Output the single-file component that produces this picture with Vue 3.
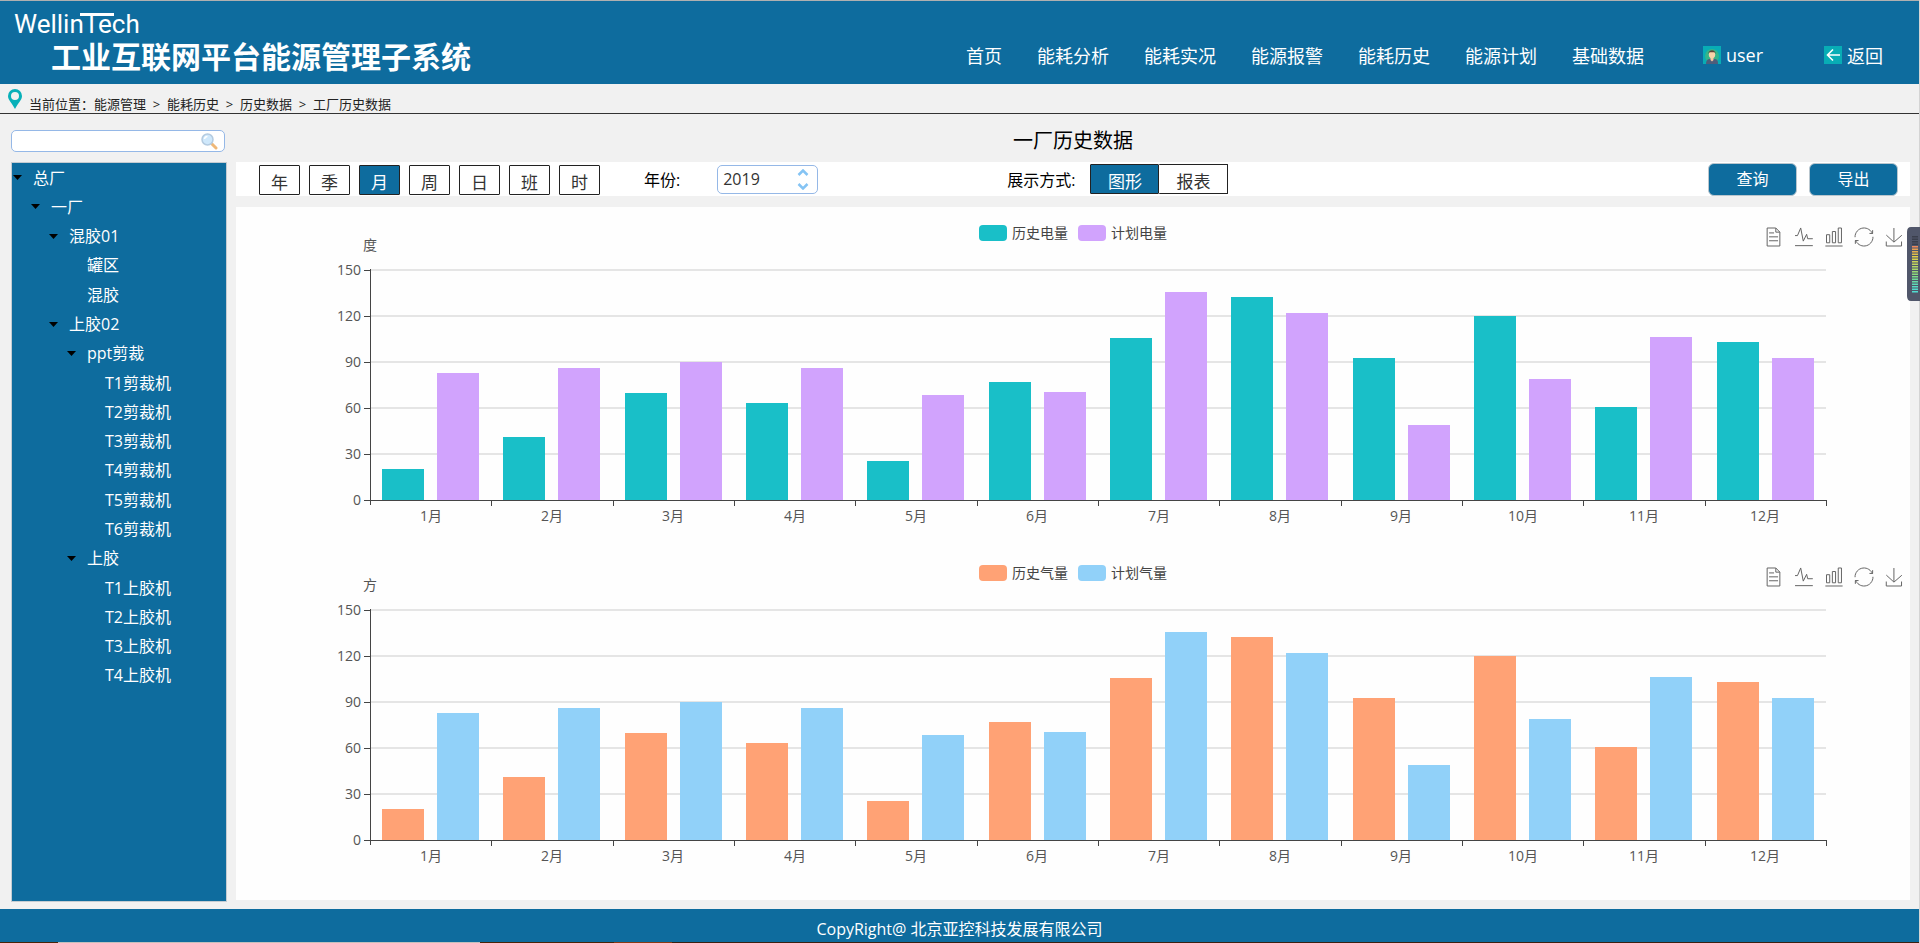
<script setup>
import { ref } from 'vue'

const navItems = ['首页', '能耗分析', '能耗实况', '能源报警', '能耗历史', '能源计划', '基础数据']
const crumbs = ['能源管理', '能耗历史', '历史数据', '工厂历史数据']

const tree = [
  { label: '总厂', level: 0, open: true },
  { label: '一厂', level: 1, open: true },
  { label: '混胶01', level: 2, open: true },
  { label: '罐区', level: 3 },
  { label: '混胶', level: 3 },
  { label: '上胶02', level: 2, open: true },
  { label: 'ppt剪裁', level: 3, open: true },
  { label: 'T1剪裁机', level: 4 },
  { label: 'T2剪裁机', level: 4 },
  { label: 'T3剪裁机', level: 4 },
  { label: 'T4剪裁机', level: 4 },
  { label: 'T5剪裁机', level: 4 },
  { label: 'T6剪裁机', level: 4 },
  { label: '上胶', level: 3, open: true },
  { label: 'T1上胶机', level: 4 },
  { label: 'T2上胶机', level: 4 },
  { label: 'T3上胶机', level: 4 },
  { label: 'T4上胶机', level: 4 },
]

const periods = ['年', '季', '月', '周', '日', '班', '时']
const period = ref('月')
const modes = ['图形', '报表']
const mode = ref('图形')
const year = ref(2019)
const keyword = ref('')

const actual = [20, 41, 70, 63, 25.6, 76.7, 105.6, 132.2, 92.6, 120, 60.5, 103]
const plan = [82.6, 86, 90, 86.4, 68.7, 70.7, 135.6, 122.2, 48.7, 78.8, 106, 92.3]

const charts = [
  { unit: '度', series: [{ name: '历史电量', tone: 'teal', data: actual }, { name: '计划电量', tone: 'violet', data: plan }] },
  { unit: '方', series: [{ name: '历史气量', tone: 'orange', data: actual }, { name: '计划气量', tone: 'sky', data: plan }] },
]

const plot = { left: 134, right: 1590, top: 63, bottom: 293 }
const step = (plot.right - plot.left) / 12
const ticks = [0, 30, 60, 90, 120, 150]
const yOf = (v) => Math.round(plot.bottom - (v / 150) * (plot.bottom - plot.top))
const xOf = (i) => Math.round(plot.left + step * i)

const tools = [
  { name: '数据视图', box: '11.5 2 39.5 56', w: 13, h: 18, d: 'M17.5,17.3H33M45.4,29.5h-28M11.5,2v56H51V14.8L38.4,2H11.5zM38.4,2.2v12.7H51M45.4,41.7h-28' },
  { name: '切换为折线图', box: '4 7 52 52', w: 18, h: 18, d: 'M4.1,28.9h7.1l9.3-22l7.4,38l9.7-19.7l3,12.8h14.9M4.1,58h51.4' },
  { name: '切换为柱状图', box: '2 2 56 56', w: 18, h: 18, d: 'M6.7,22.9h10V48h-10V22.9zM24.9,13h10v35h-10V13zM43.2,2h10v46h-10V2zM3.1,58h53.7' },
  { name: '还原', box: '2 2 56 56', w: 18, h: 18, d: 'M47,18.9h9.8V8.7M56.3,20.1C52.1,9,40.5,0.6,26.8,2.1C12.6,3.7,1.6,16.2,2.1,30.6M13,41.1H3.1v10.2M3.7,39.9c4.2,11.1,15.8,19.5,29.5,18c14.2-1.6,25.2-14.1,24.7-28.5' },
  { name: '保存为图片', box: '0.5 0 58 58', w: 18, h: 18, d: 'M4.7,22.9L29.3,45.5L54.7,23.4M4.6,43.6L4.6,58L53.8,58L53.8,43.6M29.2,45.1L29.2,0' },
]

const meter = ['#3a3f4d', '#3a3f4d', '#3a3f4d', '#3a3f4d', '#f08a5a', '#e8a054', '#e2b04e', '#dfc04a', '#e2d048', '#d6d350', '#cad458', '#c0d660', '#b4d866', '#a8d96c', '#9ada74', '#8cdb7c', '#7edc88', '#70dc98', '#66dca8', '#5edcb6', '#58dcc4', '#54dccc', '#50dcd0']
</script>

<template>
  <div class="page">
    <header class="top">
      <div class="brand">
        <div class="logo">WellinTech</div>
        <h1>工业互联网平台能源管理子系统</h1>
      </div>
      <nav>
        <a v-for="n in navItems" :key="n" href="#">{{ n }}</a>
        <a href="#" class="user">
          <svg width="18" height="18" viewBox="0 0 18 18"><rect width="18" height="18" fill="#08adb5" /><circle cx="9" cy="10" r="7" fill="#35b58a" /><path d="M3 18c0-4 2-5 4-5h4c3 0 4 1 4 5z" fill="#4d5d7c" /><path d="M7.500 11h3v3l-1.500 1.500-1.500-1.500z" fill="#f4c9a0" /><ellipse cx="9" cy="8.500" rx="3.200" ry="3.800" fill="#f9d2a8" /><path d="M5.500 8c-.5-5 7.500-5 7 0l-1-1.800H6.500z" fill="#5b4638" /></svg>user</a>
        <a href="#" class="back">
          <svg width="18" height="18" viewBox="0 0 18 18"><rect width="18" height="18" fill="#08adb5" /><path d="M16 9H4M9 3.500L3.500 9 9 14.500" fill="none" stroke="#fff" stroke-width="1.600" /></svg>返回</a>
      </nav>
    </header>

    <div class="crumbs">
      <svg width="14" height="20" viewBox="0 0 14 20"><path d="M7 0a7 7 0 0 1 7 7c0 4-4 7-7 13C4 14 0 11 0 7a7 7 0 0 1 7-7zm0 3a4 4 0 1 0 0 8 4 4 0 0 0 0-8z" fill="#08b0b9" fill-rule="evenodd" /></svg>
      <p>当前位置：<template v-for="(c, i) in crumbs" :key="c"><i v-if="i">&gt;</i><span>{{ c }}</span></template></p>
    </div>

    <main>
      <aside>
        <div class="search">
          <input v-model="keyword" type="text" aria-label="搜索" />
          <button type="button" aria-label="查找">
            <svg width="17" height="17" viewBox="0 0 17 17"><path d="M10.500 10.500l4.500 4.500" stroke="#efb878" stroke-width="3" stroke-linecap="round" /><circle cx="6.500" cy="6.500" r="5.500" fill="#cfe8fb" stroke="#b4cbe0" stroke-width="1.500" /><path d="M3.500 6a3 3 0 0 1 3-2.500" fill="none" stroke="#fff" stroke-width="1.500" /></svg>
          </button>
        </div>
        <div class="tree">
          <ul>
            <li v-for="t in tree" :key="t.label" :class="'lv' + t.level">
              <svg width="9" height="5" viewBox="0 0 9 5"><path v-if="t.open" d="M0 0h9L4.500 5z" /></svg>
              <span>{{ t.label }}</span>
            </li>
          </ul>
        </div>
      </aside>

      <section class="content">
        <h2>一厂历史数据</h2>
        <div class="bar">
          <div class="periods">
            <button v-for="p in periods" :key="p" type="button" :class="{ on: p === period }" @click="period = p">{{ p }}</button>
          </div>
          <label for="year">年份:</label>
          <div class="spinner">
            <input id="year" v-model="year" type="text" />
            <div class="arrows">
              <button type="button" aria-label="增加" @click="year++"><svg width="12" height="7" viewBox="0 0 12 7"><path d="M1.500 6L6 1.500 10.500 6" /></svg></button>
              <button type="button" aria-label="减少" @click="year--"><svg width="12" height="7" viewBox="0 0 12 7"><path d="M1.500 1L6 5.500 10.500 1" /></svg></button>
            </div>
          </div>
          <div class="mode">
            <span>展示方式:</span>
            <div class="modes">
              <button v-for="m in modes" :key="m" type="button" :class="{ on: m === mode }" @click="mode = m">{{ m }}</button>
            </div>
          </div>
          <div class="actions">
            <button type="button">查询</button>
            <button type="button">导出</button>
          </div>
        </div>

        <div class="panel">
          <figure v-for="c in charts" :key="c.unit" class="chart">
            <svg class="plot" viewBox="0 0 1674 340">
              <rect v-for="t in ticks.slice(1)" :key="t" class="grid" :x="plot.left" :y="yOf(t) - 1" :width="plot.right - plot.left" height="2" />
              <template v-for="(s, k) in c.series" :key="s.name">
                <rect v-for="(v, i) in s.data" :key="i" :class="s.tone" :x="xOf(i) + (k ? 67 : 12)" :y="yOf(v)" width="42" :height="plot.bottom - yOf(v)" />
              </template>
              <g class="axis">
                <rect :x="plot.left" :y="plot.top - 1" width="1" :height="plot.bottom - plot.top + 6" />
                <rect :x="plot.left" :y="plot.bottom" :width="plot.right - plot.left + 1" height="1" />
                <rect v-for="i in 12" :key="i" :x="xOf(i)" :y="plot.bottom" width="1" height="6" />
                <rect v-for="t in ticks" :key="t" :x="plot.left - 6" :y="yOf(t)" width="6" height="1" />
              </g>
              <text :x="plot.left" y="43" text-anchor="middle">{{ c.unit }}</text>
              <text v-for="t in ticks" :key="t" :x="plot.left - 9" :y="yOf(t) + 5" text-anchor="end">{{ t }}</text>
              <text v-for="i in 12" :key="i" :x="xOf(i - 0.5)" :y="plot.bottom + 21" text-anchor="middle">{{ i }}月</text>
            </svg>
            <figcaption>
              <div class="legend">
                <span v-for="s in c.series" :key="s.name"><b :class="s.tone"></b>{{ s.name }}</span>
              </div>
              <div class="tools">
                <button v-for="t in tools" :key="t.name" type="button" :aria-label="t.name">
                  <svg :width="t.w" :height="t.h" :viewBox="t.box"><path :d="t.d" /></svg>
                </button>
              </div>
            </figcaption>
          </figure>
        </div>
      </section>
    </main>

    <footer>CopyRight@ 北京亚控科技发展有限公司</footer>
    <div class="strip"></div>

    <svg class="meter" width="13" height="74" viewBox="0 0 13 74">
      <path d="M13 0H4Q0 0 0 5V69Q0 74 4 74H13z" fill="#50566a" />
      <rect v-for="(m, i) in meter" :key="i" x="5" :y="9 + i * 2.500" width="6" height="1.500" :fill="m" />
    </svg>
  </div>
</template>

<style>
body {
  margin: 0;
}
</style>

<style scoped>
.page {
  --blue: #0e6c9e;
  position: relative;
  box-sizing: border-box;
  display: flex;
  flex-direction: column;
  min-height: 100vh;
  background: #f1f1f1;
  border-right: 1px solid #d4d4d4;
  font: 16px "Open Sans", "Noto Sans CJK SC", sans-serif;
  color: #000;
}
button, input {
  font: inherit;
  color: inherit;
  margin: 0;
  padding: 0;
  border: 0;
  background: none;
  box-sizing: border-box;
}
svg {
  display: block;
}
.top {
  box-sizing: border-box;
  height: 84px;
  border-top: 1px solid #b0b0b0;
  background: var(--blue);
  color: #fff;
  display: flex;
  justify-content: space-between;
}
.brand {
  padding: 7px 0 0 14px;
}
.logo {
  position: relative;
  font: 26px/32px Roboto, sans-serif;
}
.logo::before {
  content: "";
  position: absolute;
  top: 5px;
  left: 66px;
  width: 34px;
  height: 3px;
  background: #fff;
}
h1 {
  margin: 0 0 0 37px;
  font-size: 30px;
  line-height: 34px;
}
nav {
  display: flex;
  align-items: center;
  gap: 35px;
  padding: 24px 36px 0 0;
  font-size: 18px;
}
nav a {
  display: flex;
  align-items: center;
  gap: 5px;
  color: #fff;
  text-decoration: none;
}
.user {
  margin: 0 26px 0 24px;
}
.crumbs {
  display: flex;
  align-items: flex-start;
  gap: 7px;
  box-sizing: border-box;
  height: 30px;
  padding: 5px 8px 0;
  border-bottom: 1px solid #333;
  font-size: 13px;
  color: #222;
}
.crumbs p {
  display: flex;
  margin: 7px 0 0;
  line-height: 16px;
}
.crumbs i {
  width: 21px;
  text-align: center;
  font-style: normal;
}
main {
  flex: 1;
  display: flex;
  gap: 9px;
  padding: 0 9px 7px 11px;
}
aside {
  flex: 0 0 216px;
  display: flex;
  flex-direction: column;
  padding-top: 16px;
}
.search {
  display: flex;
  align-items: center;
  box-sizing: border-box;
  height: 22px;
  margin: 0 2px 10px 0;
  padding: 0 6px;
  border: 1px solid #95b8e7;
  border-radius: 5px;
  background: #fff;
}
.search input {
  flex: 1;
  min-width: 0;
  height: 18px;
  font-size: 14px;
}
.tree {
  flex: 1;
  border: 1px solid #c4ccd2;
  background: var(--blue);
  color: #fff;
}
.tree ul {
  display: grid;
  grid-auto-rows: 1fr;
  min-height: 527px;
  margin: 0;
  padding: 0 0 0 1px;
  list-style: none;
}
.tree li {
  display: flex;
  align-items: center;
  gap: 11px;
  line-height: 28px;
}
.lv1 { padding-left: 18px; }
.lv2 { padding-left: 36px; }
.lv3 { padding-left: 54px; }
.lv4 { padding-left: 72px; }
.content {
  flex: 1;
  min-width: 0;
  display: flex;
  flex-direction: column;
  padding-bottom: 2px;
}
h2 {
  margin: 0;
  padding: 6px 0 0;
  font-size: 20px;
  font-weight: 400;
  line-height: 42px;
  text-align: center;
}
.bar {
  display: flex;
  align-items: center;
  height: 34px;
  padding: 0 12px 0 23px;
  margin-bottom: 11px;
  background: #fff;
}
.periods {
  display: flex;
  gap: 9px;
  padding: 1px 44px 0 0;
}
.periods button, .modes button {
  width: 41px;
  height: 30px;
  padding-top: 6px;
  border: 1px solid #222;
  border-radius: 1px;
  background: #fff;
  color: #333;
  font-size: 17px;
  line-height: 22px;
}
.periods button.on, .modes button.on {
  background: var(--blue);
  color: #fff;
}
.spinner {
  display: flex;
  align-items: center;
  box-sizing: border-box;
  width: 101px;
  height: 29px;
  margin-left: 37px;
  padding: 0 8px 0 5px;
  border: 1px solid #95b8e7;
  border-radius: 5px;
  color: #333;
}
.spinner input {
  flex: 1;
  min-width: 0;
}
.arrows {
  display: grid;
  gap: 7px;
}
.arrows path {
  fill: none;
  stroke: #85c4f4;
  stroke-width: 2.5;
}
.mode {
  display: flex;
  align-items: center;
  gap: 15px;
  margin-left: 189px;
}
.modes {
  display: flex;
}
.modes button {
  width: 69px;
}
.modes button + button {
  border-left: 0;
}
.actions {
  display: flex;
  gap: 12px;
  margin-left: auto;
}
.actions button {
  width: 89px;
  height: 33px;
  padding-bottom: 2px;
  border: 1px solid #b9c6ce;
  border-radius: 6px;
  background: var(--blue);
  color: #fff;
}
.panel {
  flex: 1;
  background: #fefefe;
}
.chart {
  display: grid;
  margin: 0;
}
.plot, figcaption {
  grid-area: 1 / 1;
}
.plot {
  width: 100%;
  height: auto;
}
.plot text {
  font-size: 14px;
  fill: #555;
}
.grid { fill: #e5e5e5; }
.axis { fill: #444; }
.teal { fill: #19bfc8; background: #19bfc8; }
.violet { fill: #d1a3fd; background: #d1a3fd; }
.orange { fill: #ffa275; background: #ffa275; }
.sky { fill: #91d1f9; background: #91d1f9; }
figcaption {
  display: grid;
  grid-template-columns: 1fr auto 1fr;
  align-items: start;
}
.legend {
  grid-column: 2;
  display: flex;
  gap: 10px;
  padding-top: 16px;
  font-size: 14px;
  line-height: 20px;
  color: #444;
}
.legend span {
  display: flex;
  align-items: center;
  gap: 5px;
}
.legend b {
  width: 28px;
  height: 16px;
  border-radius: 4px;
}
.tools {
  justify-self: end;
  display: flex;
  gap: 11px;
  padding: 21px 7px 0 0;
}
.tools button {
  display: flex;
  justify-content: center;
  width: 19px;
}
.tools svg {
  overflow: visible;
}
.tools path {
  fill: none;
  stroke: #666;
  stroke-width: 1px;
  vector-effect: non-scaling-stroke;
}
footer {
  padding-top: 8px;
  background: var(--blue);
  color: #fff;
  line-height: 25px;
  text-align: center;
}
.strip {
  height: 1px;
  background: linear-gradient(90deg, #4a2408 0 3%, #c4c0bc 3% 25%, #4a2408 25% 32%, #8a3a14 32% 35%, #3c2010 35%);
}
.meter {
  position: absolute;
  top: 227px;
  right: -1px;
}
</style>
